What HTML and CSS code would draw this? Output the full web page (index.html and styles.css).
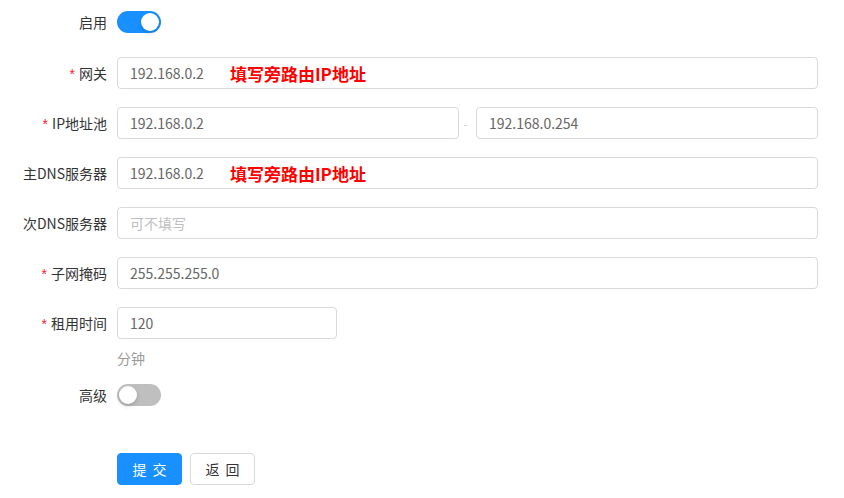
FILE: index.html
```html
<!DOCTYPE html>
<html lang="zh-CN">
<head>
  <meta charset="utf-8" />
  <meta name="viewport" content="width=device-width, initial-scale=1.0">
  <title>DHCP 设置</title>
  <link rel="stylesheet" href="styles.css">
</head>
<body>
  <form class="dhcp-form">
    <!-- 启用 -->
    <div class="form-row form-row--first">
      <label class="form-label">启用</label>
      <div class="form-control">
        <span class="switch switch--on"></span>
      </div>
    </div>

    <!-- 网关 -->
    <div class="form-row">
      <label class="form-label"><span class="req">*</span>网关</label>
      <div class="form-control has-hint">
        <input class="input" type="text" value="192.168.0.2">
        <span class="hint">填写旁路由IP地址</span>
      </div>
    </div>

    <!-- IP地址池 -->
    <div class="form-row">
      <label class="form-label"><span class="req">*</span>IP地址池</label>
      <div class="form-control range">
        <input class="input" type="text" value="192.168.0.2">
        <span class="range__sep">-</span>
        <input class="input" type="text" value="192.168.0.254">
      </div>
    </div>

    <!-- 主DNS -->
    <div class="form-row">
      <label class="form-label">主DNS服务器</label>
      <div class="form-control has-hint">
        <input class="input" type="text" value="192.168.0.2">
        <span class="hint">填写旁路由IP地址</span>
      </div>
    </div>

    <!-- 次DNS -->
    <div class="form-row">
      <label class="form-label">次DNS服务器</label>
      <div class="form-control">
        <input class="input" type="text" placeholder="可不填写">
      </div>
    </div>

    <!-- 子网掩码 -->
    <div class="form-row">
      <label class="form-label"><span class="req">*</span>子网掩码</label>
      <div class="form-control">
        <input class="input" type="text" value="255.255.255.0">
      </div>
    </div>

    <!-- 租用时间 -->
    <div class="form-row form-row--extra">
      <label class="form-label"><span class="req">*</span>租用时间</label>
      <div class="form-control">
        <input class="input input--short" type="text" value="120">
        <div class="form-extra">分钟</div>
      </div>
    </div>

    <!-- 高级 -->
    <div class="form-row form-row--adv">
      <label class="form-label">高级</label>
      <div class="form-control">
        <span class="switch"></span>
      </div>
    </div>

    <!-- 按钮 -->
    <div class="form-row form-row--actions">
      <span></span>
      <div class="form-control actions">
        <button type="button" class="btn btn--primary">提交</button>
        <button type="button" class="btn">返回</button>
      </div>
    </div>
  </form>
</body>
</html>
```

FILE: styles.css
```css
/* ========== reset ========== */
*, *::before, *::after {
  margin: 0;
  padding: 0;
  box-sizing: border-box;
}

body {
  background: #fff;
  font-family: "Noto Sans CJK SC", "Noto Sans", sans-serif;
  font-size: 14px;
  color: #333;
}

/* ========== form ========== */
.dhcp-form {
  padding: 6px 26px 0 0;
}

.form-row {
  display: grid;
  grid-template-columns: 107px 1fr;
  column-gap: 10px;
  align-items: start;
  margin-bottom: 18px;
}
.form-row--first { margin-bottom: 19px; }
.form-row--extra { margin-bottom: 10px; }
.form-row--actions { margin-top: 42px; }

.form-label {
  height: 32px;
  line-height: 32px;
  text-align: right;
  color: #333;
  white-space: nowrap;
}
.req {
  color: #f5222d;
  margin-right: 4px;
  font-family: SimSun, "Liberation Sans", sans-serif;
}

.form-control {
  min-height: 32px;
  display: flex;
  flex-direction: column;
  justify-content: center;
  position: relative;
}

/* ========== input ========== */
.input {
  width: 100%;
  height: 32px;
  padding: 0 12px;
  border: 1px solid #d9d9d9;
  border-radius: 4px;
  font: inherit;
  color: #666;
  background: #fff;
  outline: none;
}
.input::placeholder { color: #bfbfbf; }
.input--short { width: 220px; }

.hint {
  position: absolute;
  left: 113px;
  top: 50%;
  transform: translateY(-50%);
  color: #ff0000;
  font-size: 17px;
  font-weight: bold;
  pointer-events: none;
}

.range {
  flex-direction: row;
  align-items: center;
}
.range .input { flex: 1; }
.range__sep {
  flex: 0 0 17px;
  padding-right: 4px;
  text-align: center;
  color: #d9d9d9;
}

.form-extra {
  margin-top: 8px;
  line-height: 22px;
  color: #999;
}

/* ========== switch ========== */
.switch {
  display: inline-block;
  width: 44px;
  height: 22px;
  border-radius: 11px;
  background: #bfbfbf;
  position: relative;
}
.switch::after {
  content: '';
  position: absolute;
  top: 2px;
  left: 2px;
  width: 18px;
  height: 18px;
  border-radius: 50%;
  background: #fff;
  box-shadow: 0 2px 4px rgba(0, 35, 11, 0.2);
}
.switch--on { background: #1890ff; }
.switch--on::after { left: 24px; }

/* ========== buttons ========== */
.actions {
  flex-direction: row;
  justify-content: flex-start;
  gap: 8px;
}
.btn {
  width: 65px;
  height: 32px;
  padding-left: 6px;
  border: 1px solid #d9d9d9;
  border-radius: 4px;
  background: #fff;
  color: #333;
  font: inherit;
  letter-spacing: 6px;
  cursor: pointer;
}
.btn--primary {
  background: #1890ff;
  border-color: #1890ff;
  color: #fff;
}
```
